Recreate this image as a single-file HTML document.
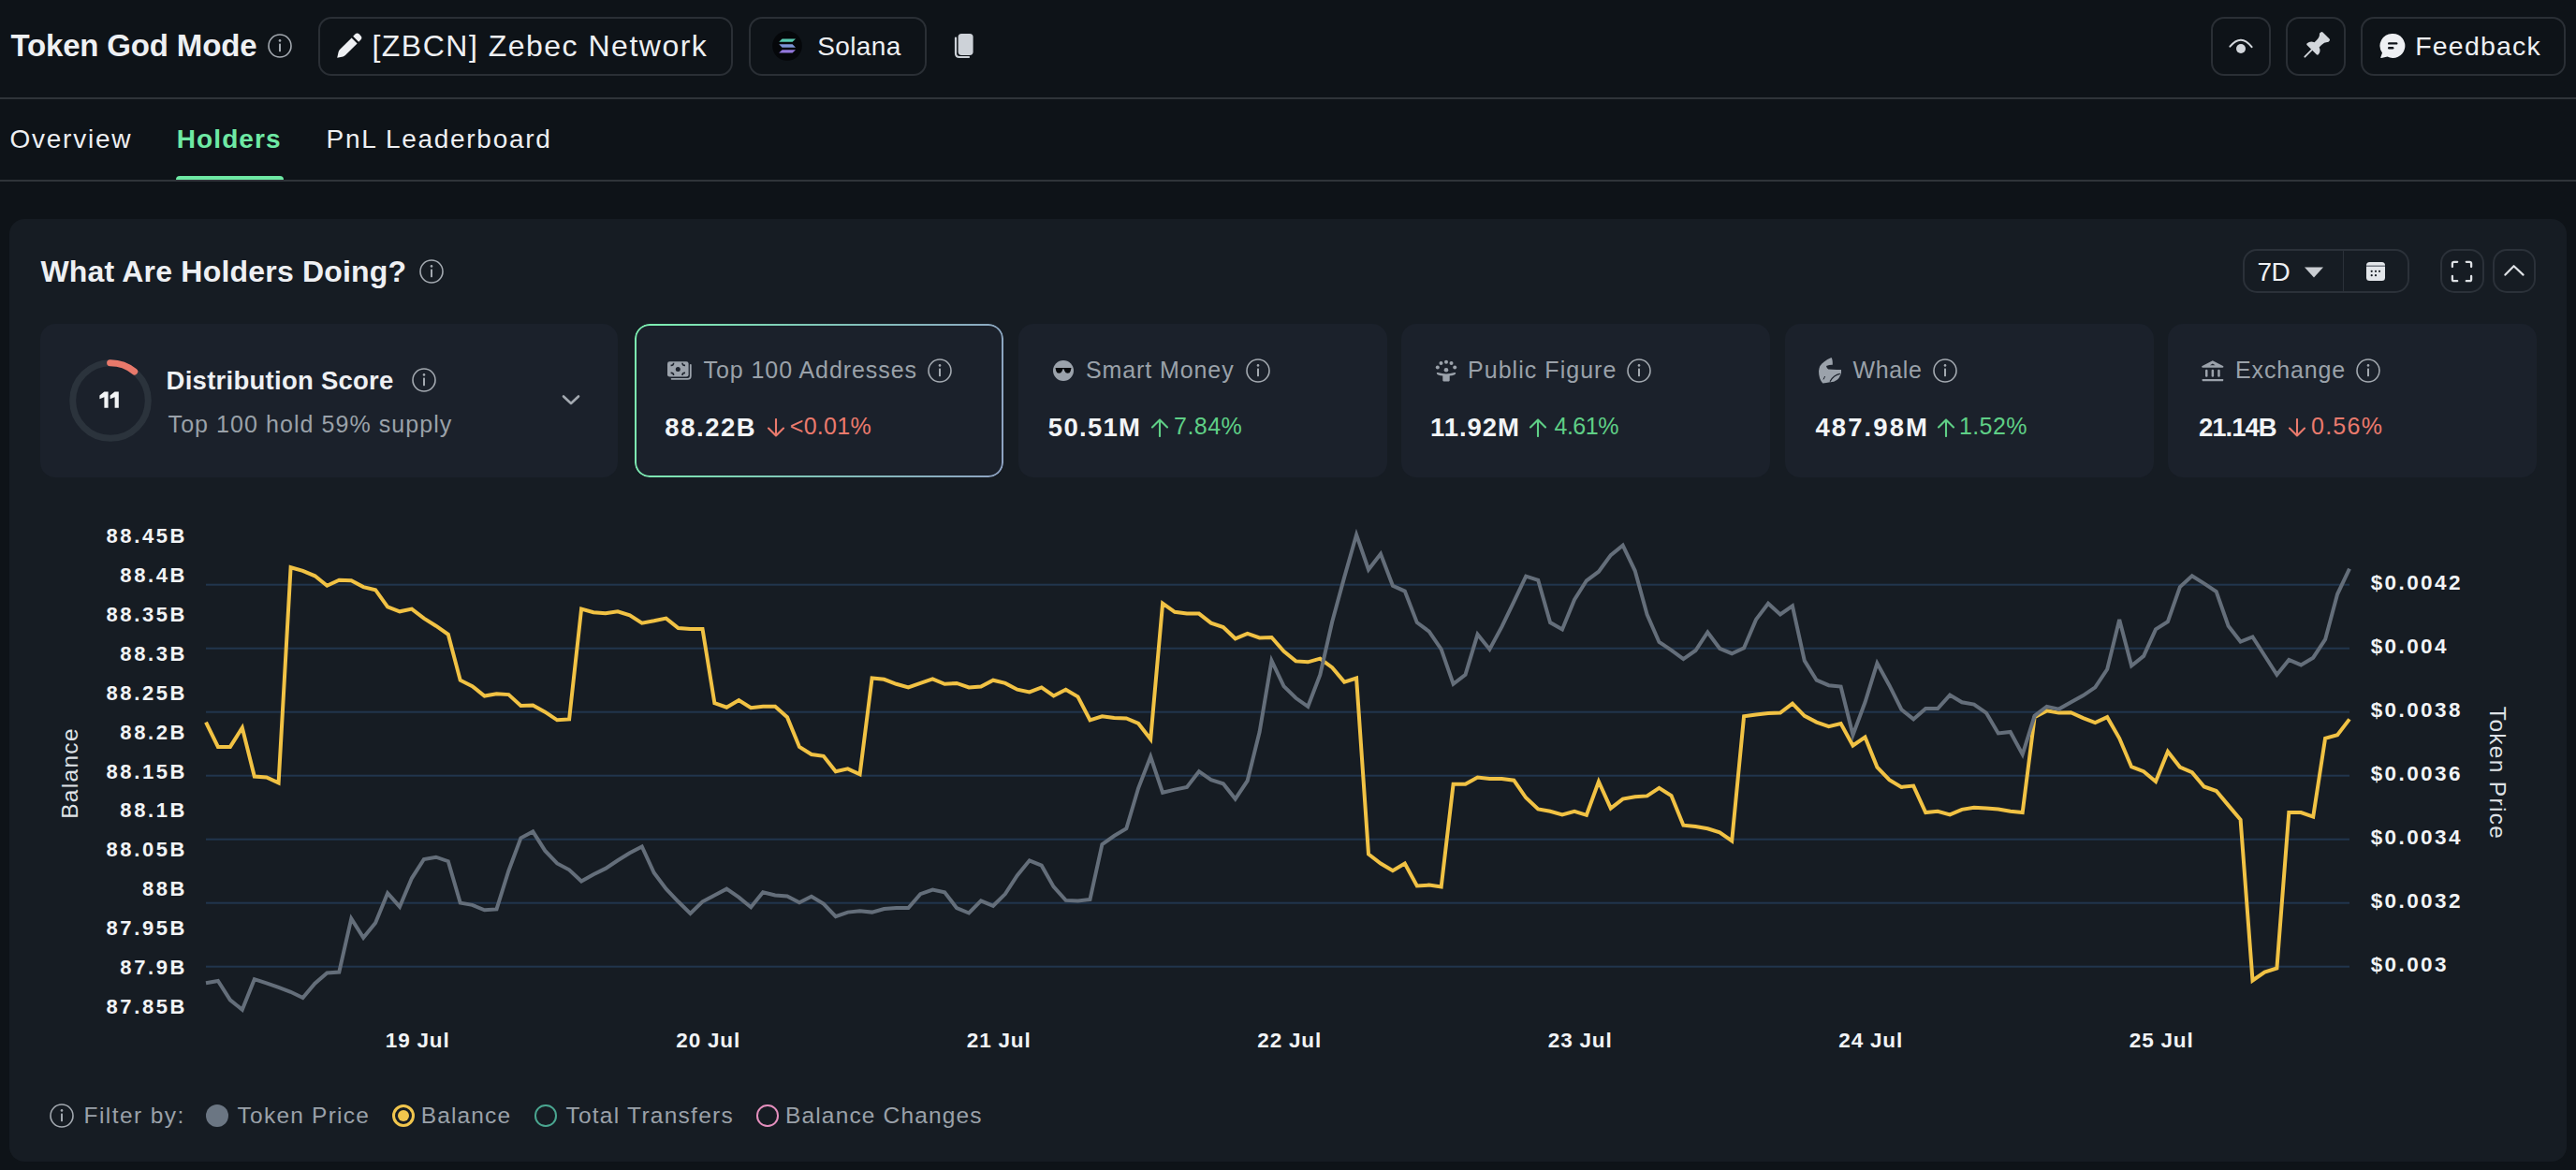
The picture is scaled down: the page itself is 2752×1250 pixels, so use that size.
<!DOCTYPE html>
<html><head><meta charset="utf-8">
<style>
*{box-sizing:border-box;margin:0;padding:0}
html,body{width:2752px;height:1250px;overflow:hidden;background:#0e1318;font-family:"Liberation Sans",sans-serif;color:#eef0f3}
.a{position:absolute;white-space:nowrap;line-height:1}
</style></head><body>
<div class="a" style="left:11.4px;top:32.2px;font-size:33px;font-weight:700;letter-spacing:-0.16px;color:#eef0f3;">Token God Mode</div>
<svg class="a" style="left:285px;top:35px" width="28" height="28" viewBox="0 0 28 28"><circle cx="14" cy="14" r="12" fill="none" stroke="#a3a9b0" stroke-width="1.6"/><rect x="13" y="11.6" width="2" height="8.6" rx="0.6" fill="#a3a9b0"/><circle cx="14" cy="8.4" r="1.3" fill="#a3a9b0"/></svg>
<div class="a" style="left:339.5px;top:17.5px;width:443.5px;height:63px;border:2px solid #2a2f35;border-radius:14px;background:transparent"></div>
<svg class="a" style="left:356px;top:32px" width="34" height="34" viewBox="0 0 34 34"><path d="M4.2 29.8 L5.6 23.5 Q6 22 7.2 20.8 L19.6 8.4 L25.6 14.4 L13.2 26.8 Q12 28 10.5 28.4 Z" fill="#eef0f3"/><path d="M21.2 6.8 L23.4 4.6 Q25.6 2.6 27.8 4.6 L29.4 6.2 Q31.4 8.4 29.4 10.6 L27.2 12.8 Z" fill="#eef0f3"/></svg>
<div class="a" style="left:397.4px;top:33.1px;font-size:32px;font-weight:400;letter-spacing:1.5px;color:#eef0f3;">[ZBCN] Zebec Network</div>
<div class="a" style="left:799.5px;top:17.5px;width:190px;height:63px;border:2px solid #2a2f35;border-radius:14px;background:transparent"></div>
<svg class="a" style="left:825px;top:33px" width="32" height="32" viewBox="0 0 32 32"><circle cx="16" cy="16" r="15.8" fill="#05070a"/><path d="M10.6 8.4 H25 L21.6 11.8 H7.2 Z" fill="#58c9b0"/><path d="M7.2 14.3 H21.6 L25 17.7 H10.6 Z" fill="#7d95d6"/><path d="M10.6 20.2 H25 L21.6 23.6 H7.2 Z" fill="#9378dc"/></svg>
<div class="a" style="left:873.2px;top:35.9px;font-size:28px;font-weight:400;letter-spacing:0.4px;color:#eef0f3;">Solana</div>
<svg class="a" style="left:1016px;top:32px" width="28" height="34" viewBox="0 0 28 34"><path d="M5 8.5 V25 Q5 29 9 29 H19" fill="none" stroke="#cdd2d8" stroke-width="2.2" stroke-linecap="round"/><rect x="7.6" y="3.9" width="16" height="23" rx="3.6" fill="#cdd2d8"/></svg>
<div class="a" style="left:2362px;top:17.5px;width:63.5px;height:63px;border:2px solid #2a2f35;border-radius:14px;background:transparent"></div>
<svg class="a" style="left:2374px;top:29px" width="40" height="40" viewBox="0 0 40 40"><path d="M8.4 20.7 Q20 6.5 31.6 21.2" fill="none" stroke="#d3d7dc" stroke-width="2" stroke-linecap="round"/><circle cx="20" cy="23" r="5" fill="#d3d7dc"/></svg>
<div class="a" style="left:2442px;top:17.5px;width:63.5px;height:63px;border:2px solid #2a2f35;border-radius:14px;background:transparent"></div>
<svg class="a" style="left:2453px;top:30px" width="40" height="40" viewBox="0 0 40 40"><g transform="rotate(45 20 20)"><path d="M13.5 4.5 Q13.5 3 15 3 H25 Q26.5 3 26.5 4.5 V6.5 Q23.6 8.6 23.6 13.5 V17 Q28 18.6 28.6 23.2 Q28.6 24.6 27.2 24.6 H12.8 Q11.4 24.6 11.4 23.2 Q12 18.6 16.4 17 V13.5 Q16.4 8.6 13.5 6.5 Z" fill="#d3d7dc"/><rect x="19.1" y="24" width="1.8" height="12" rx="0.9" fill="#d3d7dc"/></g></svg>
<div class="a" style="left:2522px;top:17.5px;width:219px;height:63px;border:2px solid #2a2f35;border-radius:14px;background:transparent"></div>
<svg class="a" style="left:2541px;top:34px" width="30" height="30" viewBox="0 0 30 30"><path d="M15.5 2 A13 13 0 1 1 9.5 26.6 L3 28 Q2 28.2 2.3 27.2 L4 22.5 A13 13 0 0 1 15.5 2 Z" fill="#eef0f3"/><rect x="10" y="11.2" width="10.4" height="2.4" rx="1.2" fill="#10141a"/><rect x="10" y="16" width="6.4" height="2.4" rx="1.2" fill="#10141a"/></svg>
<div class="a" style="left:2580.2px;top:35.0px;font-size:28.5px;font-weight:400;letter-spacing:1.21px;color:#eef0f3;">Feedback</div>
<div class="a" style="left:0;top:104px;width:2752px;height:2px;background:#2f3439"></div>
<div class="a" style="left:10.4px;top:134.9px;font-size:28px;font-weight:400;letter-spacing:1.77px;color:#eef0f3;">Overview</div>
<div class="a" style="left:188.7px;top:134.9px;font-size:28px;font-weight:700;letter-spacing:1.12px;color:#6ee9a4;">Holders</div>
<div class="a" style="left:348.5px;top:134.9px;font-size:28px;font-weight:400;letter-spacing:1.71px;color:#eef0f3;">PnL Leaderboard</div>
<div class="a" style="left:188px;top:187.5px;width:115px;height:5px;background:#6ee9a4;border-radius:4px 4px 0 0"></div>
<div class="a" style="left:0;top:192px;width:2752px;height:2px;background:#2f3439"></div>
<div class="a" style="left:10px;top:234px;width:2732px;height:1007px;background:#161c23;border-radius:16px"></div>
<div class="a" style="left:43.4px;top:274.1px;font-size:32px;font-weight:700;letter-spacing:0.2px;color:#eef0f3;">What Are Holders Doing?</div>
<svg class="a" style="left:447px;top:276px" width="28" height="28" viewBox="0 0 28 28"><circle cx="14" cy="14" r="12" fill="none" stroke="#a3a9b0" stroke-width="1.6"/><rect x="13" y="11.6" width="2" height="8.6" rx="0.6" fill="#a3a9b0"/><circle cx="14" cy="8.4" r="1.3" fill="#a3a9b0"/></svg>
<div class="a" style="left:2395.5px;top:266px;width:178px;height:47px;border:2px solid #2b3139;border-radius:15px;background:transparent"></div>
<div class="a" style="left:2502.5px;top:267px;width:1.6px;height:45px;background:#2b3139"></div>
<div class="a" style="left:2411.5px;top:277.0px;font-size:28px;font-weight:400;letter-spacing:-0.5px;color:#eef0f3;">7D</div>
<svg class="a" style="left:2461px;top:285px" width="22" height="12" viewBox="0 0 22 12"><path d="M1 0.6 H21 L11 11.4 Z" fill="#c9cdd2"/></svg>
<svg class="a" style="left:2527px;top:279px" width="22" height="22" viewBox="0 0 22 22"><rect x="1" y="1" width="20" height="20" rx="3.5" fill="#e3e6ea"/><rect x="1" y="4.6" width="20" height="1.2" fill="#59606a"/><circle cx="6.7" cy="10.8" r="1.1" fill="#161c23"/><circle cx="11" cy="10.8" r="1.1" fill="#161c23"/><circle cx="15" cy="10.8" r="1.1" fill="#161c23"/><circle cx="6.7" cy="15.2" r="1.1" fill="#161c23"/><circle cx="11" cy="15.2" r="1.1" fill="#161c23"/></svg>
<div class="a" style="left:2607px;top:266px;width:46.5px;height:47px;border:2px solid #2b3139;border-radius:15px;background:transparent"></div>
<svg class="a" style="left:2616px;top:276px" width="28" height="28" viewBox="0 0 28 28"><path d="M3.9 9 V5.6 Q3.9 3.8 5.7 3.8 H9.2 M18.8 3.8 H22.3 Q24.1 3.8 24.1 5.6 V9 M24.1 19 V22.4 Q24.1 24.2 22.3 24.2 H18.8 M9.2 24.2 H5.7 Q3.9 24.2 3.9 22.4 V19" fill="none" stroke="#dde0e4" stroke-width="2.3" stroke-linecap="round"/></svg>
<div class="a" style="left:2662.5px;top:266px;width:46.5px;height:47px;border:2px solid #2b3139;border-radius:15px;background:transparent"></div>
<svg class="a" style="left:2672px;top:276px" width="28" height="28" viewBox="0 0 28 28"><path d="M4.4 17.6 L13.6 8.2 L23.6 17.6" fill="none" stroke="#dde0e4" stroke-width="2.2" stroke-linecap="round" stroke-linejoin="round"/></svg>
<div class="a" style="left:42.5px;top:346px;width:617.5px;height:164px;background:#1b212b;border-radius:16px"></div>
<svg class="a" style="left:72px;top:381.5px" width="92" height="92" viewBox="0 0 92 92"><circle cx="46" cy="46" r="40.3" fill="none" stroke="#2b333c" stroke-width="7"/><path d="M 45.6 5.7 A 40.3 40.3 0 0 1 71.7 15" fill="none" stroke="#e8796b" stroke-width="7" stroke-linecap="round"/></svg>
<svg class="a" style="left:100px;top:414px" width="34" height="26" viewBox="0 0 34 26"><path d="M6.4 8.4 L11.4 4.4 H15.6 V21.8 H11.4 V10.2 L6.4 12.2 Z M17.6 8.4 L22.6 4.4 H26.8 V21.8 H22.6 V10.2 L17.6 12.2 Z" fill="#f2f4f6"/></svg>
<div class="a" style="left:177.6px;top:393.1px;font-size:27.5px;font-weight:700;letter-spacing:0.26px;color:#eef0f3;">Distribution Score</div>
<svg class="a" style="left:438.6px;top:392px" width="28" height="28" viewBox="0 0 28 28"><circle cx="14" cy="14" r="12" fill="none" stroke="#a3a9b0" stroke-width="1.6"/><rect x="13" y="11.6" width="2" height="8.6" rx="0.6" fill="#a3a9b0"/><circle cx="14" cy="8.4" r="1.3" fill="#a3a9b0"/></svg>
<div class="a" style="left:179.6px;top:441.2px;font-size:25px;font-weight:400;letter-spacing:1.06px;color:#9aa1a9;">Top 100 hold 59% supply</div>
<svg class="a" style="left:598px;top:418px" width="24" height="18" viewBox="0 0 24 18"><path d="M4 5.5 L12 13 L20 5.5" fill="none" stroke="#a3a9b0" stroke-width="2.6" stroke-linecap="round" stroke-linejoin="round"/></svg>
<div class="a" style="left:678px;top:346px;width:394px;height:164px;background:#1b212b;border-radius:16px"></div>
<div class="a" style="left:678px;top:346px;width:394px;height:164px;border-radius:16px;padding:2px;background:linear-gradient(100deg,#7cf0b0 0%,#80c8b8 45%,#8ea2c2 100%);-webkit-mask:linear-gradient(#000 0 0) content-box,linear-gradient(#000 0 0);-webkit-mask-composite:xor;mask-composite:exclude"></div>
<svg class="a" style="left:710px;top:383px" width="32" height="26" viewBox="0 0 32 26"><path d="M27.8 6.8 V18.4 Q27.8 21.8 24.4 21.8 H7.6" fill="none" stroke="#9ba2ab" stroke-width="1.8" stroke-linecap="round"/><rect x="3" y="3.2" width="22.6" height="16.4" rx="2.4" fill="#9ba2ab"/><circle cx="14.3" cy="11.4" r="2.5" fill="#1b212b"/><path d="M6.6 7.4 Q9.6 7.6 9.6 4.8 M19 4.8 Q19 7.6 22 7.4 M6.6 15.4 Q9.6 15.2 9.6 18 M19 18 Q19 15.2 22 15.4" fill="none" stroke="#1b212b" stroke-width="1.6"/></svg>
<div class="a" style="left:751.5px;top:383.2px;font-size:25px;font-weight:400;letter-spacing:0.93px;color:#9aa1a9;">Top 100 Addresses</div>
<svg class="a" style="left:990px;top:382px" width="28" height="28" viewBox="0 0 28 28"><circle cx="14" cy="14" r="12" fill="none" stroke="#a3a9b0" stroke-width="1.6"/><rect x="13" y="11.6" width="2" height="8.6" rx="0.6" fill="#a3a9b0"/><circle cx="14" cy="8.4" r="1.3" fill="#a3a9b0"/></svg>
<div class="a" style="left:710.3px;top:442.5px;font-size:27.5px;font-weight:700;letter-spacing:1.54px;color:#f2f4f6;">88.22B</div>
<div class="a" style="left:819px;top:447px;width:20px;height:20px;color:#ea7a6d"><svg width="20" height="20" viewBox="0 0 20 20"><path d="M10 1 V18.4 M2 10.6 L10 18.6 L18 10.6" fill="none" stroke="currentColor" stroke-width="2.1" stroke-linecap="round" stroke-linejoin="round"/></svg></div>
<div class="a" style="left:843.8px;top:443.1px;font-size:25px;font-weight:400;letter-spacing:0.28px;color:#ea7a6d;">&lt;0.01%</div>
<div class="a" style="left:1087.6px;top:346px;width:394px;height:164px;background:#1b212b;border-radius:16px"></div>
<svg class="a" style="left:1122.7px;top:383px" width="26" height="26" viewBox="0 0 26 26"><circle cx="13" cy="13" r="11" fill="#9ba2ab"/><path d="M4.5 10 H21.5 L20.7 13.4 Q20.1 15.8 17.7 15.8 Q15.3 15.8 14.4 13.6 L13.3 10.9 H12.7 L11.6 13.6 Q10.7 15.8 8.3 15.8 Q5.9 15.8 5.3 13.4 Z" fill="#07090c"/></svg>
<div class="a" style="left:1160.0px;top:383.2px;font-size:25px;font-weight:400;letter-spacing:0.9px;color:#9aa1a9;">Smart Money</div>
<svg class="a" style="left:1329.8px;top:382px" width="28" height="28" viewBox="0 0 28 28"><circle cx="14" cy="14" r="12" fill="none" stroke="#a3a9b0" stroke-width="1.6"/><rect x="13" y="11.6" width="2" height="8.6" rx="0.6" fill="#a3a9b0"/><circle cx="14" cy="8.4" r="1.3" fill="#a3a9b0"/></svg>
<div class="a" style="left:1119.8px;top:442.5px;font-size:27.5px;font-weight:700;letter-spacing:1.3px;color:#f2f4f6;">50.51M</div>
<div class="a" style="left:1229px;top:447px;width:20px;height:20px;color:#5fcf86"><svg width="20" height="20" viewBox="0 0 20 20"><path d="M10 19 V1.6 M2 9.4 L10 1.4 L18 9.4" fill="none" stroke="currentColor" stroke-width="2.1" stroke-linecap="round" stroke-linejoin="round"/></svg></div>
<div class="a" style="left:1254.1px;top:443.1px;font-size:25px;font-weight:400;letter-spacing:0.43px;color:#5fcf86;">7.84%</div>
<div class="a" style="left:1497.2px;top:346px;width:394px;height:164px;background:#1b212b;border-radius:16px"></div>
<svg class="a" style="left:1532px;top:383px" width="26" height="26" viewBox="0 0 26 26"><circle cx="13" cy="3.8" r="2" fill="#9ba2ab"/><circle cx="7.5" cy="5" r="2" fill="#9ba2ab"/><circle cx="18.5" cy="5" r="2" fill="#9ba2ab"/><circle cx="3.8" cy="9.6" r="2" fill="#9ba2ab"/><circle cx="22.2" cy="9.6" r="2" fill="#9ba2ab"/><circle cx="13" cy="12.2" r="2.3" fill="#9ba2ab"/><path d="M2.8 15.6 Q2.8 14.6 4 15 Q9 16.4 13 16.4 Q17 16.4 22 15 Q23.2 14.6 23.2 15.6 Q23.2 17 21.6 17.6 Q19.4 18.4 16.7 18.6 V23.6 Q16.7 24.4 15.8 24.4 H10.2 Q9.3 24.4 9.3 23.6 V18.6 Q6.6 18.4 4.4 17.6 Q2.8 17 2.8 15.6 Z" fill="#9ba2ab"/></svg>
<div class="a" style="left:1568.0px;top:383.2px;font-size:25px;font-weight:400;letter-spacing:1.04px;color:#9aa1a9;">Public Figure</div>
<svg class="a" style="left:1737px;top:382px" width="28" height="28" viewBox="0 0 28 28"><circle cx="14" cy="14" r="12" fill="none" stroke="#a3a9b0" stroke-width="1.6"/><rect x="13" y="11.6" width="2" height="8.6" rx="0.6" fill="#a3a9b0"/><circle cx="14" cy="8.4" r="1.3" fill="#a3a9b0"/></svg>
<div class="a" style="left:1528.0px;top:442.5px;font-size:27.5px;font-weight:700;letter-spacing:0.95px;color:#f2f4f6;">11.92M</div>
<div class="a" style="left:1633px;top:447px;width:20px;height:20px;color:#5fcf86"><svg width="20" height="20" viewBox="0 0 20 20"><path d="M10 19 V1.6 M2 9.4 L10 1.4 L18 9.4" fill="none" stroke="currentColor" stroke-width="2.1" stroke-linecap="round" stroke-linejoin="round"/></svg></div>
<div class="a" style="left:1660.5px;top:443.1px;font-size:25px;font-weight:400;letter-spacing:-0.5px;color:#5fcf86;">4.61%</div>
<div class="a" style="left:1906.8px;top:346px;width:394px;height:164px;background:#1b212b;border-radius:16px"></div>
<svg class="a" style="left:1935px;top:378px" width="40" height="36" viewBox="0 0 40 36"><path d="M21.5 4 Q23 6 22.8 11.7 Q19.8 11.5 16 12.9 Q16.6 15.6 18.2 16.6 Q25 17.2 32 16.9 Q32.4 20 31.4 22.2 Q29.6 26.6 27.7 27.7 Q24 30.4 20 30.2 Q16 31 12.3 31.4 Q8 27 8 18.5 Q8.4 12 13.8 8.6 Q17 5.6 21.5 4 Z" fill="#9ba2ab"/><path d="M13 27.4 Q14.4 24.6 14.6 24" fill="none" stroke="#1b212b" stroke-width="1"/><path d="M20 29.6 Q24 22.6 30.8 21.4" fill="none" stroke="#1b212b" stroke-width="1.2"/></svg>
<div class="a" style="left:1979.5px;top:383.2px;font-size:25px;font-weight:400;letter-spacing:0.62px;color:#9aa1a9;">Whale</div>
<svg class="a" style="left:2064px;top:382px" width="28" height="28" viewBox="0 0 28 28"><circle cx="14" cy="14" r="12" fill="none" stroke="#a3a9b0" stroke-width="1.6"/><rect x="13" y="11.6" width="2" height="8.6" rx="0.6" fill="#a3a9b0"/><circle cx="14" cy="8.4" r="1.3" fill="#a3a9b0"/></svg>
<div class="a" style="left:1939.5px;top:442.5px;font-size:27.5px;font-weight:700;letter-spacing:2.08px;color:#f2f4f6;">487.98M</div>
<div class="a" style="left:2068.5px;top:447px;width:20px;height:20px;color:#5fcf86"><svg width="20" height="20" viewBox="0 0 20 20"><path d="M10 19 V1.6 M2 9.4 L10 1.4 L18 9.4" fill="none" stroke="currentColor" stroke-width="2.1" stroke-linecap="round" stroke-linejoin="round"/></svg></div>
<div class="a" style="left:2093.0px;top:443.1px;font-size:25px;font-weight:400;letter-spacing:0.38px;color:#5fcf86;">1.52%</div>
<div class="a" style="left:2316.4px;top:346px;width:394px;height:164px;background:#1b212b;border-radius:16px"></div>
<svg class="a" style="left:2350px;top:383px" width="28" height="28" viewBox="0 0 28 28"><path d="M13.8 2.2 L25.4 8.2 Q25.6 9.8 24.2 9.8 H3.4 Q2 9.8 2.2 8.2 Z" fill="#9ba2ab"/><path d="M11 7.2 L13.8 5.6 L16.6 7.2 Z" fill="#1b212b"/><rect x="6" y="11.8" width="2.5" height="8" rx="1.2" fill="#9ba2ab"/><rect x="12.6" y="11.8" width="2.5" height="8" rx="1.2" fill="#9ba2ab"/><rect x="19.2" y="11.8" width="2.5" height="8" rx="1.2" fill="#9ba2ab"/><rect x="2.6" y="21.9" width="22.6" height="2.3" rx="0.6" fill="#9ba2ab"/></svg>
<div class="a" style="left:2388.0px;top:383.2px;font-size:25px;font-weight:400;letter-spacing:0.86px;color:#9aa1a9;">Exchange</div>
<svg class="a" style="left:2516px;top:382px" width="28" height="28" viewBox="0 0 28 28"><circle cx="14" cy="14" r="12" fill="none" stroke="#a3a9b0" stroke-width="1.6"/><rect x="13" y="11.6" width="2" height="8.6" rx="0.6" fill="#a3a9b0"/><circle cx="14" cy="8.4" r="1.3" fill="#a3a9b0"/></svg>
<div class="a" style="left:2349.0px;top:442.5px;font-size:27.5px;font-weight:700;letter-spacing:-1.0px;color:#f2f4f6;">21.14B</div>
<div class="a" style="left:2443.5px;top:447px;width:20px;height:20px;color:#ea7a6d"><svg width="20" height="20" viewBox="0 0 20 20"><path d="M10 1 V18.4 M2 10.6 L10 18.6 L18 10.6" fill="none" stroke="currentColor" stroke-width="2.1" stroke-linecap="round" stroke-linejoin="round"/></svg></div>
<div class="a" style="left:2469.0px;top:443.1px;font-size:25px;font-weight:400;letter-spacing:1.25px;color:#ea7a6d;">0.56%</div>
<svg class="a" style="left:0;top:0" width="2752" height="1250">
<rect x="220" y="623.7" width="2290" height="2" fill="#21354d"/>
<rect x="220" y="691.7" width="2290" height="2" fill="#21354d"/>
<rect x="220" y="759.7" width="2290" height="2" fill="#21354d"/>
<rect x="220" y="827.7" width="2290" height="2" fill="#21354d"/>
<rect x="220" y="895.7" width="2290" height="2" fill="#21354d"/>
<rect x="220" y="963.7" width="2290" height="2" fill="#21354d"/>
<rect x="220" y="1031.7" width="2290" height="2" fill="#21354d"/>
<polyline points="220.0,771.6 232.9,797.9 245.9,797.9 258.8,777.5 271.8,829.6 284.7,830.5 297.6,836.4 310.6,606.2 323.5,609.8 336.4,615.3 349.4,625.7 362.3,619.8 375.3,620.3 388.2,627.1 401.1,630.2 414.1,648.4 427.0,653.3 439.9,650.6 452.9,660.6 465.8,668.7 478.8,677.8 491.7,726.7 504.6,733.1 517.6,743.5 530.5,741.2 543.4,742.1 556.4,753.9 569.3,753.5 582.3,760.7 595.2,769.3 608.1,768.4 621.1,650.6 634.0,654.2 646.9,655.2 659.9,653.3 672.8,657.4 685.8,665.6 698.7,663.3 711.6,660.6 724.6,671.0 737.5,671.9 750.5,671.9 763.4,751.2 776.3,755.7 789.3,748.0 802.2,756.2 815.1,754.8 828.1,754.8 841.0,766.2 854.0,797.9 866.9,806.0 879.8,807.8 892.8,824.2 905.7,821.4 918.6,827.3 931.6,724.5 944.5,725.8 957.5,730.8 970.4,734.4 983.3,729.9 996.3,725.4 1009.2,730.8 1022.1,729.9 1035.1,734.4 1048.0,733.5 1061.0,726.7 1073.9,729.9 1086.8,736.7 1099.8,739.4 1112.7,734.4 1125.6,743.5 1138.6,736.7 1151.5,744.4 1164.5,769.3 1177.4,765.3 1190.3,767.1 1203.3,767.5 1216.2,773.0 1229.2,789.7 1242.1,644.7 1255.0,653.8 1268.0,655.6 1280.9,655.6 1293.8,665.6 1306.8,670.1 1319.7,682.3 1332.7,676.9 1345.6,681.4 1358.5,681.0 1371.5,695.9 1384.4,706.4 1397.3,707.3 1410.3,703.6 1423.2,713.1 1436.2,728.6 1449.1,724.5 1462.0,912.5 1475.0,922.5 1487.9,930.2 1500.8,922.5 1513.8,946.5 1526.7,945.6 1539.7,947.4 1552.6,837.8 1565.5,837.8 1578.5,830.5 1591.4,831.9 1604.4,831.9 1617.3,833.7 1630.2,852.3 1643.2,864.5 1656.1,866.8 1669.0,870.4 1682.0,866.8 1694.9,870.8 1707.9,835.0 1720.8,863.6 1733.7,853.6 1746.7,851.3 1759.6,850.4 1772.5,841.8 1785.5,850.0 1798.4,881.7 1811.4,883.1 1824.3,885.3 1837.2,889.4 1850.2,898.5 1863.1,765.3 1876.0,763.4 1889.0,762.1 1901.9,761.6 1914.9,751.7 1927.8,764.8 1940.7,771.6 1953.7,776.1 1966.6,773.0 1979.5,796.5 1992.5,787.5 2005.4,819.6 2018.4,833.2 2031.3,840.9 2044.2,839.6 2057.2,868.1 2070.1,866.8 2083.1,870.4 2096.0,864.9 2108.9,862.7 2121.9,863.6 2134.8,864.5 2147.7,866.8 2160.7,868.1 2173.6,766.2 2186.6,759.4 2199.5,761.6 2212.4,761.2 2225.4,767.1 2238.3,772.1 2251.2,766.2 2264.2,788.8 2277.1,819.2 2290.1,824.2 2303.0,835.0 2315.9,802.9 2328.9,819.6 2341.8,825.1 2354.7,840.5 2367.7,845.0 2380.6,860.4 2393.6,875.8 2406.5,1047.5 2419.4,1038.5 2432.4,1034.4 2445.3,868.1 2458.2,868.1 2471.2,872.6 2484.1,788.8 2497.1,785.2 2510.0,768.4" fill="none" stroke="#f1c244" stroke-width="4" stroke-linejoin="miter" stroke-miterlimit="4"/>
<polyline points="220.0,1050.3 232.9,1048.0 245.9,1068.4 258.8,1078.8 271.8,1046.2 284.7,1050.3 297.6,1054.8 310.6,1059.8 323.5,1066.1 336.4,1050.7 349.4,1039.4 362.3,1038.5 375.3,981.4 388.2,1001.8 401.1,985.9 414.1,954.2 427.0,968.7 439.9,938.3 452.9,918.0 465.8,915.7 478.8,920.2 491.7,964.6 504.6,966.9 517.6,972.3 530.5,971.4 543.4,930.2 556.4,895.3 569.3,888.5 582.3,908.9 595.2,922.5 608.1,929.3 621.1,941.5 634.0,934.3 646.9,927.9 659.9,919.3 672.8,911.2 685.8,904.4 698.7,932.5 711.6,949.7 724.6,963.3 737.5,975.9 750.5,963.3 763.4,956.5 776.3,949.7 789.3,958.7 802.2,969.2 815.1,953.3 828.1,956.5 841.0,957.4 854.0,964.2 866.9,957.8 879.8,965.5 892.8,979.1 905.7,974.6 918.6,973.2 931.6,974.6 944.5,971.0 957.5,970.1 970.4,970.1 983.3,955.1 996.3,950.6 1009.2,953.3 1022.1,970.1 1035.1,975.5 1048.0,962.4 1061.0,967.8 1073.9,955.1 1086.8,935.2 1099.8,919.3 1112.7,924.7 1125.6,947.4 1138.6,961.9 1151.5,962.4 1164.5,961.0 1177.4,902.1 1190.3,893.0 1203.3,885.3 1216.2,841.8 1229.2,808.3 1242.1,846.8 1255.0,843.6 1268.0,840.9 1280.9,824.2 1293.8,833.2 1306.8,837.3 1319.7,853.6 1332.7,834.1 1345.6,782.0 1358.5,705.9 1371.5,733.1 1384.4,745.8 1397.3,754.8 1410.3,720.9 1423.2,664.2 1436.2,616.6 1449.1,571.3 1462.0,608.5 1475.0,591.7 1487.9,625.7 1500.8,631.6 1513.8,665.1 1526.7,674.6 1539.7,693.7 1552.6,730.8 1565.5,720.9 1578.5,677.8 1591.4,693.7 1604.4,669.7 1617.3,642.9 1630.2,615.7 1643.2,619.8 1656.1,665.1 1669.0,672.4 1682.0,640.7 1694.9,620.3 1707.9,610.7 1720.8,593.1 1733.7,582.7 1746.7,609.8 1759.6,656.5 1772.5,686.0 1785.5,694.6 1798.4,704.1 1811.4,695.0 1824.3,675.5 1837.2,692.8 1850.2,698.2 1863.1,692.3 1876.0,661.9 1889.0,644.7 1901.9,656.5 1914.9,647.4 1927.8,705.9 1940.7,726.7 1953.7,732.2 1966.6,733.5 1979.5,785.2 1992.5,750.3 2005.4,708.6 2018.4,732.2 2031.3,758.0 2044.2,768.4 2057.2,757.1 2070.1,757.1 2083.1,742.6 2096.0,750.3 2108.9,752.6 2121.9,761.6 2134.8,783.4 2147.7,782.0 2160.7,806.0 2173.6,764.8 2186.6,754.8 2199.5,757.6 2212.4,750.3 2225.4,743.1 2238.3,734.4 2251.2,715.0 2264.2,661.9 2277.1,711.3 2290.1,700.9 2303.0,672.4 2315.9,664.2 2328.9,627.1 2341.8,615.3 2354.7,623.4 2367.7,632.0 2380.6,668.7 2393.6,685.5 2406.5,680.5 2419.4,700.5 2432.4,720.9 2445.3,705.0 2458.2,710.4 2471.2,702.7 2484.1,683.2 2497.1,634.8 2510.0,607.6" fill="none" stroke="#646e7a" stroke-width="4" stroke-linejoin="miter" stroke-miterlimit="4"/>
</svg>
<div class="a" style="right:2551.9px;top:562.0px;font-size:22px;font-weight:700;letter-spacing:2.62px;color:#f2f4f6;text-align:right">88.45B</div>
<div class="a" style="right:2551.9px;top:603.9px;font-size:22px;font-weight:700;letter-spacing:2.62px;color:#f2f4f6;text-align:right">88.4B</div>
<div class="a" style="right:2551.9px;top:645.8px;font-size:22px;font-weight:700;letter-spacing:2.62px;color:#f2f4f6;text-align:right">88.35B</div>
<div class="a" style="right:2551.9px;top:687.8px;font-size:22px;font-weight:700;letter-spacing:2.62px;color:#f2f4f6;text-align:right">88.3B</div>
<div class="a" style="right:2551.9px;top:729.7px;font-size:22px;font-weight:700;letter-spacing:2.62px;color:#f2f4f6;text-align:right">88.25B</div>
<div class="a" style="right:2551.9px;top:771.6px;font-size:22px;font-weight:700;letter-spacing:2.62px;color:#f2f4f6;text-align:right">88.2B</div>
<div class="a" style="right:2551.9px;top:813.5px;font-size:22px;font-weight:700;letter-spacing:2.62px;color:#f2f4f6;text-align:right">88.15B</div>
<div class="a" style="right:2551.9px;top:855.4px;font-size:22px;font-weight:700;letter-spacing:2.62px;color:#f2f4f6;text-align:right">88.1B</div>
<div class="a" style="right:2551.9px;top:897.4px;font-size:22px;font-weight:700;letter-spacing:2.62px;color:#f2f4f6;text-align:right">88.05B</div>
<div class="a" style="right:2551.9px;top:939.3px;font-size:22px;font-weight:700;letter-spacing:2.62px;color:#f2f4f6;text-align:right">88B</div>
<div class="a" style="right:2551.9px;top:981.2px;font-size:22px;font-weight:700;letter-spacing:2.62px;color:#f2f4f6;text-align:right">87.95B</div>
<div class="a" style="right:2551.9px;top:1023.1px;font-size:22px;font-weight:700;letter-spacing:2.62px;color:#f2f4f6;text-align:right">87.9B</div>
<div class="a" style="right:2551.9px;top:1065.0px;font-size:22px;font-weight:700;letter-spacing:2.62px;color:#f2f4f6;text-align:right">87.85B</div>
<div class="a" style="left:2532.7px;top:612.3px;font-size:22.5px;font-weight:700;letter-spacing:2.4px;color:#f2f4f6">$0.0042</div>
<div class="a" style="left:2532.7px;top:680.2px;font-size:22.5px;font-weight:700;letter-spacing:2.4px;color:#f2f4f6">$0.004</div>
<div class="a" style="left:2532.7px;top:748.2px;font-size:22.5px;font-weight:700;letter-spacing:2.4px;color:#f2f4f6">$0.0038</div>
<div class="a" style="left:2532.7px;top:816.1px;font-size:22.5px;font-weight:700;letter-spacing:2.4px;color:#f2f4f6">$0.0036</div>
<div class="a" style="left:2532.7px;top:884.1px;font-size:22.5px;font-weight:700;letter-spacing:2.4px;color:#f2f4f6">$0.0034</div>
<div class="a" style="left:2532.7px;top:952.0px;font-size:22.5px;font-weight:700;letter-spacing:2.4px;color:#f2f4f6">$0.0032</div>
<div class="a" style="left:2532.7px;top:1020.0px;font-size:22.5px;font-weight:700;letter-spacing:2.4px;color:#f2f4f6">$0.003</div>
<div class="a" style="left:411.8px;top:1101.1px;font-size:22.5px;font-weight:700;letter-spacing:0.82px;color:#f2f4f6">19 Jul</div>
<div class="a" style="left:722.3px;top:1101.1px;font-size:22.5px;font-weight:700;letter-spacing:0.82px;color:#f2f4f6">20 Jul</div>
<div class="a" style="left:1032.8px;top:1101.1px;font-size:22.5px;font-weight:700;letter-spacing:0.82px;color:#f2f4f6">21 Jul</div>
<div class="a" style="left:1343.3px;top:1101.1px;font-size:22.5px;font-weight:700;letter-spacing:0.82px;color:#f2f4f6">22 Jul</div>
<div class="a" style="left:1653.8px;top:1101.1px;font-size:22.5px;font-weight:700;letter-spacing:0.82px;color:#f2f4f6">23 Jul</div>
<div class="a" style="left:1964.3px;top:1101.1px;font-size:22.5px;font-weight:700;letter-spacing:0.82px;color:#f2f4f6">24 Jul</div>
<div class="a" style="left:2274.8px;top:1101.1px;font-size:22.5px;font-weight:700;letter-spacing:0.82px;color:#f2f4f6">25 Jul</div>
<div class="a" id="t_bal" style="left:74.8px;top:826px;font-size:24.5px;color:#dfe2e6;letter-spacing:1.3px;transform:translate(-50%,-50%) rotate(-90deg)">Balance</div>
<div class="a" id="t_tp" style="left:2668px;top:826px;font-size:24.5px;color:#dfe2e6;letter-spacing:1.3px;transform:translate(-50%,-50%) rotate(90deg)">Token Price</div>
<svg class="a" style="left:52px;top:1178px" width="28" height="28" viewBox="0 0 28 28"><circle cx="14" cy="14" r="12" fill="none" stroke="#a3a9b0" stroke-width="1.6"/><rect x="13" y="11.6" width="2" height="8.6" rx="0.6" fill="#a3a9b0"/><circle cx="14" cy="8.4" r="1.3" fill="#a3a9b0"/></svg>
<div class="a" style="left:89.5px;top:1179.9px;font-size:24.5px;font-weight:400;letter-spacing:1.43px;color:#9aa1a9;">Filter by:</div>
<div class="a" style="left:219.7px;top:1179.8px;width:24.2px;height:24.2px;border-radius:50%;background:#6b7683"></div>
<div class="a" style="left:253.6px;top:1179.9px;font-size:24.5px;font-weight:400;letter-spacing:1.22px;color:#9aa1a9;">Token Price</div>
<div class="a" style="left:418.6px;top:1179.6px;width:24.6px;height:24.6px;border-radius:50%;border:3px solid #f0c54d"></div><div class="a" style="left:424.9px;top:1185.9px;width:12px;height:12px;border-radius:50%;background:#f0c54d"></div>
<div class="a" style="left:449.8px;top:1179.9px;font-size:24.5px;font-weight:400;letter-spacing:1.13px;color:#9aa1a9;">Balance</div>
<div class="a" style="left:571.1px;top:1180.1px;width:23.6px;height:23.6px;border-radius:50%;border:2.2px solid #4aa690"></div>
<div class="a" style="left:604.4px;top:1179.9px;font-size:24.5px;font-weight:400;letter-spacing:1.26px;color:#9aa1a9;">Total Transfers</div>
<div class="a" style="left:808.3px;top:1180.1px;width:23.6px;height:23.6px;border-radius:50%;border:2.2px solid #e48fbd"></div>
<div class="a" style="left:839.0px;top:1179.9px;font-size:24.5px;font-weight:400;letter-spacing:1.15px;color:#9aa1a9;">Balance Changes</div>
</body></html>
